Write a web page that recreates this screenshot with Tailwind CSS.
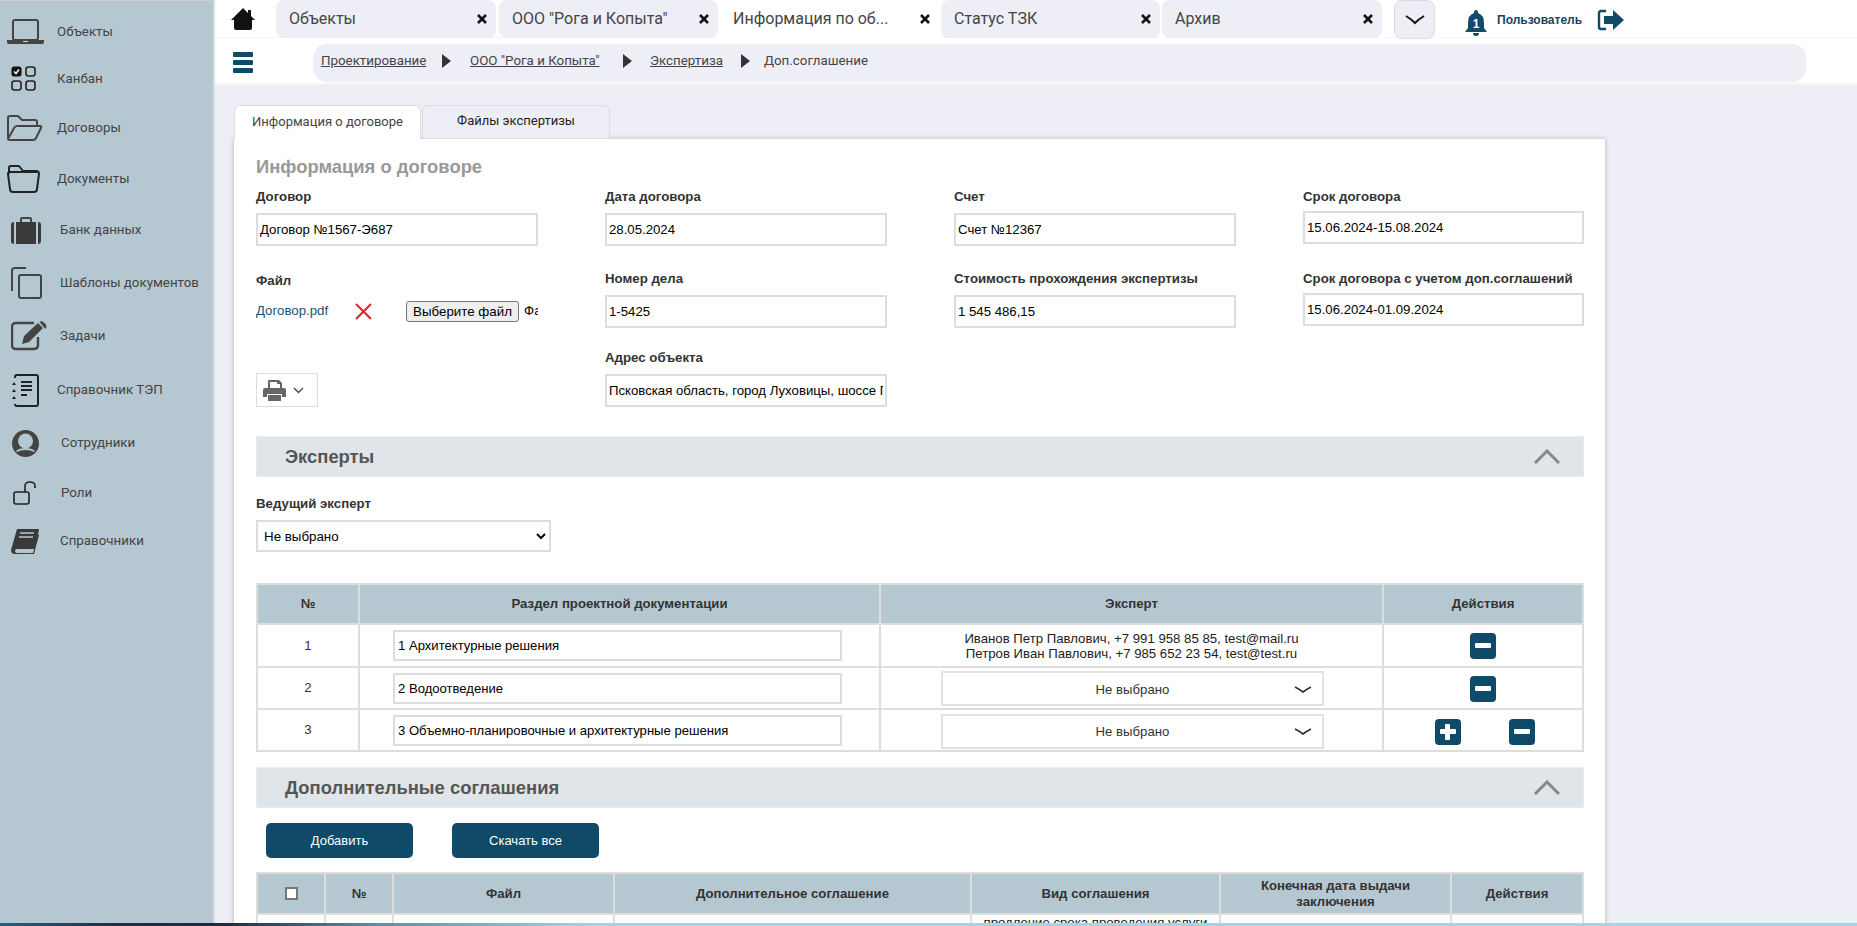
<!DOCTYPE html>
<html lang="ru">
<head>
    <meta charset="UTF-8">
    <title>Информация о договоре</title>
    <script src="https://cdn.jsdelivr.net/npm/@tailwindcss/browser@4"></script>
</head>
<body class="h-[926px] w-[1857px] overflow-hidden flex bg-[#eeeff6] relative font-['Liberation_Sans',sans-serif] text-[13.25px] text-[#333]">

    <!-- sidebar -->
    <aside class="w-[215px] h-full shrink-0 bg-[#b5c8d2] border-r-2 border-[#d5dde3] border-t border-t-[#d0d0d0] pt-[7px] font-['Roboto',sans-serif] text-[13.33px] text-[#444]">
        <div class="h-[47px] flex items-center">
            <svg class="w-[37px] h-[26px] ml-[7px] mr-[13px]" viewBox="0 0 37 26"><rect x="6" y="1" width="25" height="20" rx="2" fill="none" stroke="#444" stroke-width="2"/><path d="M0 21h37v2q0 2-2 2H2q-2 0-2-2z" fill="#444"/><rect x="16" y="22" width="5" height="1" fill="#ddd"/></svg>
            <span>Объекты</span>
        </div>
        <div class="h-[47px] flex items-center">
            <svg class="w-[25px] h-[25px] ml-[11px] mr-[21px]" viewBox="0 0 25 25"><rect x="0.5" y="0.5" width="10" height="10" rx="2.5" fill="#111"/><path d="M3 5.500l2 2 3-4" fill="none" stroke="#fff" stroke-width="1.500"/><rect x="15" y="1" width="9" height="9" rx="2.500" fill="none" stroke="#222" stroke-width="1.600"/><rect x="1" y="15" width="9" height="9" rx="2.500" fill="none" stroke="#222" stroke-width="1.600"/><rect x="15" y="15" width="9" height="9" rx="2.500" fill="none" stroke="#222" stroke-width="1.600"/></svg>
            <span>Канбан</span>
        </div>
        <div class="h-[52px] flex items-center">
            <svg class="w-[36px] h-[26px] ml-[7px] mr-[14px]" viewBox="0 0 36 26"><path d="M1 22V3q0-2 2-2h8l4 4h13q2 0 2 2v4M1 24l6-11q1-2 3-2h23q2 0 1 2l-5 10q-1 2-3 2H3q-2 0-2-2z" fill="none" stroke="#444" stroke-width="2" stroke-linejoin="round"/></svg>
            <span>Договоры</span>
        </div>
        <div class="h-[50px] flex items-center">
            <svg class="w-[33px] h-[28px] ml-[7px] mr-[17px]" viewBox="0 0 33 28"><path d="M2 8V3q0-2 2-2h8l4 5h13q3 0 3 3l-2 15q0 3-3 3H6q-3 0-3-3L1 9q0-2 1-1zM2 7h28" fill="none" stroke="#222" stroke-width="2" stroke-linejoin="round"/></svg>
            <span>Документы</span>
        </div>
        <div class="h-[52px] flex items-center">
            <svg class="w-[30px] h-[27px] ml-[11px] mr-[19px]" viewBox="0 0 30 27"><path d="M10 5V2q0-1 1-1h8q1 0 1 1v3" fill="none" stroke="#444" stroke-width="2"/><path d="M5 5h20v22H5zM3 5v22Q0 27 0 24V8q0-3 3-3zM27 5q3 0 3 3v16q0 3-3 3z" fill="#3a3a3a"/></svg>
            <span>Банк данных</span>
        </div>
        <div class="h-[53px] flex items-center">
            <svg class="w-[31px] h-[32px] ml-[11px] mr-[18px]" viewBox="0 0 31 32"><path d="M15 1H4Q1 1 1 4v20" fill="none" stroke="#444" stroke-width="2"/><rect x="8" y="8" width="22" height="23" rx="2" fill="none" stroke="#444" stroke-width="2"/></svg>
            <span>Шаблоны документов</span>
        </div>
        <div class="h-[54px] flex items-center">
            <svg class="w-[36px] h-[30px] ml-[11px] mr-[13px]" viewBox="0 0 36 30"><path d="M23 2H5Q1 2 1 6v18q0 4 4 4h18q4 0 4-4v-8" fill="none" stroke="#444" stroke-width="2.400"/><path d="M13 15L27 2l5 5-14 14-7 2zM28.500 1l2-1q1 0 4 3 1 2 1 3l-1 2z" fill="#444"/></svg>
            <span>Задачи</span>
        </div>
        <div class="h-[54px] flex items-center">
            <svg class="w-[28px] h-[33px] ml-[11px] mr-[18px]" viewBox="0 0 28 33"><path d="M4 4V3q0-2 2-2h19q2 0 2 2v27q0 2-2 2H6q-2 0-2-2" fill="none" stroke="#222" stroke-width="2"/><path d="M10 8h11M10 12h11M10 16h11M10 21h6" stroke="#222" stroke-width="2"/><path d="M3 8l2 3H1zM3 15l2 3H1zM3 22l2 3H1z" fill="#222"/></svg>
            <span>Справочник ТЭП</span>
        </div>
        <div class="h-[52px] flex items-center">
            <svg class="w-[27px] h-[27px] ml-[12px] mr-[22px]" viewBox="0 0 27 27"><circle cx="13.500" cy="13.500" r="13.500" fill="#444"/><circle cx="13.500" cy="11" r="7.500" fill="#b5c8d2"/><path d="M4 21q3-3 9.500-3t9.500 3l-1 1q-3-2-8.500-2T5 22z" fill="#b5c8d2"/></svg>
            <span>Сотрудники</span>
        </div>
        <div class="h-[47px] flex items-center">
            <svg class="w-[24px] h-[24px] ml-[13px] mr-[24px]" viewBox="0 0 24 24"><rect x="1" y="11" width="15" height="12" rx="2" fill="none" stroke="#222" stroke-width="1.600"/><path d="M12 11V5q0-4 5-4t5 4v2" fill="none" stroke="#222" stroke-width="1.600"/></svg>
            <span>Роли</span>
        </div>
        <div class="h-[50px] flex items-center">
            <svg class="w-[29px] h-[26px] ml-[11px] mr-[20px]" viewBox="0 0 29 26"><path d="M6 1h21q1 0 1 1l-4 18q0 1-2 1H6q-2 0-2 2t2 2h16l5-19 1 1-5 19H4q-4 0-4-4z" fill="#3a3a3a"/><path d="M9 5h14M8 9h14" stroke="#b5c8d2" stroke-width="1.500"/></svg>
            <span>Справочники</span>
        </div>
    </aside>

    <main class="flex-1 min-w-0 flex flex-col">
        <!-- tabs row -->
        <header class="bg-white h-[85px] shrink-0 border-b-2 border-[#f4f4f8] font-['Roboto',sans-serif]">
            <div class="h-[38px] flex items-start border-b border-[#f6f6f8]">
                <svg class="w-[24px] h-[22px] ml-[16px] mt-[8px]" viewBox="0 0 24 22"><path d="M12 0L0 12h3v8q0 2 2 2h14q2 0 2-2v-8h3l-4-4V2h-3v3z" fill="#111"/></svg>
                <div class="w-[220px] h-[38px] ml-[21px] bg-[#eeeff6] rounded-lg flex items-center justify-between pl-[13px] pr-[9px] text-[16px] text-[#444]">
                    <span>Объекты</span>
                    <svg class="w-[10px] h-[10px]" viewBox="0 0 10 10"><path d="M1 1l8 8M9 1L1 9" stroke="#111" stroke-width="2.500"/></svg>
                </div>
                <div class="w-[219px] h-[38px] ml-[3px] bg-[#eeeff6] rounded-lg flex items-center justify-between pl-[13px] pr-[9px] text-[16px] text-[#444]">
                    <span>ООО "Рога и Копыта"</span>
                    <svg class="w-[10px] h-[10px]" viewBox="0 0 10 10"><path d="M1 1l8 8M9 1L1 9" stroke="#111" stroke-width="2.500"/></svg>
                </div>
                <div class="w-[223px] h-[38px] bg-white flex items-center justify-between pl-[15px] pr-[11px] text-[16px] text-[#444]">
                    <span>Информация по об...</span>
                    <svg class="w-[10px] h-[10px]" viewBox="0 0 10 10"><path d="M1 1l8 8M9 1L1 9" stroke="#111" stroke-width="2.500"/></svg>
                </div>
                <div class="w-[219px] h-[38px] bg-[#eeeff6] rounded-lg flex items-center justify-between pl-[13px] pr-[9px] text-[16px] text-[#444]">
                    <span>Статус ТЗК</span>
                    <svg class="w-[10px] h-[10px]" viewBox="0 0 10 10"><path d="M1 1l8 8M9 1L1 9" stroke="#111" stroke-width="2.500"/></svg>
                </div>
                <div class="w-[220px] h-[38px] ml-[2px] bg-[#eeeff6] rounded-lg flex items-center justify-between pl-[13px] pr-[9px] text-[16px] text-[#444]">
                    <span>Архив</span>
                    <svg class="w-[10px] h-[10px]" viewBox="0 0 10 10"><path d="M1 1l8 8M9 1L1 9" stroke="#111" stroke-width="2.500"/></svg>
                </div>
                <div class="w-[41px] h-[39px] ml-[12px] bg-[#eeeff6] border border-[#ddd] rounded-lg flex items-center justify-center">
                    <svg class="w-[20px] h-[10px]" viewBox="0 0 20 10"><path d="M1 1q5 3 9 7 4-4 9-7" fill="none" stroke="#111" stroke-width="2"/></svg>
                </div>
                <svg class="w-[22px] h-[26px] ml-[30px] mt-[10px]" viewBox="0 0 22 26"><path d="M11 0q2 0 2 3 6 2 6 10v5l3 4H0l3-4v-5q0-8 6-10 0-3 2-3zM8 23h6q0 3-3 3t-3-3z" fill="#0f4a68"/><text x="11" y="18" text-anchor="middle" font-size="12" font-weight="bold" fill="#fff" font-family="Liberation Sans">1</text></svg>
                <span class="ml-[10px] mt-[13px] text-[12px] leading-[14px] font-bold text-[#14465f] font-['Liberation_Sans',sans-serif]">Пользователь</span>
                <svg class="w-[28px] h-[22px] ml-[15px] mt-[9px]" viewBox="0 0 28 22"><path d="M9 2H4Q2 2 2 4v14q0 2 2 2h5" fill="none" stroke="#0f4a68" stroke-width="2.400"/><path d="M7 7h9V1l11 10-11 10v-6H7z" fill="#0f4a68"/></svg>
            </div>
            <div class="flex items-center h-[46px] pt-[4px]">
                <div class="w-[20px] h-[21px] ml-[18px] mb-[2px] flex flex-col justify-between">
                    <div class="h-[5px] bg-[#0f4a68] rounded-[1px]"></div>
                    <div class="h-[5px] bg-[#0f4a68] rounded-[1px]"></div>
                    <div class="h-[5px] bg-[#0f4a68] rounded-[1px]"></div>
                </div>
                <nav class="w-[1493px] h-[38px] ml-[60px] bg-[#eeeff6] rounded-[14px] flex items-center pl-[8px] pb-[4px] text-[13.33px] text-[#444]">
                    <a class="underline w-[105px] whitespace-nowrap">Проектирование</a>
                    <svg class="w-[9px] h-[14px] ml-[16px]" viewBox="0 0 9 14"><path d="M0 0l9 7-9 7z" fill="#333"/></svg>
                    <a class="underline ml-[19px] w-[128px] whitespace-nowrap">ООО "Рога и Копыта"</a>
                    <svg class="w-[9px] h-[14px] ml-[25px]" viewBox="0 0 9 14"><path d="M0 0l9 7-9 7z" fill="#333"/></svg>
                    <a class="underline ml-[18px] w-[71px] whitespace-nowrap">Экспертиза</a>
                    <svg class="w-[9px] h-[14px] ml-[20px]" viewBox="0 0 9 14"><path d="M0 0l9 7-9 7z" fill="#333"/></svg>
                    <span class="ml-[14px]">Доп.соглашение</span>
                </nav>
            </div>
        </header>

        <!-- page -->
        <div class="pl-[19px] pt-[20px] w-[1392px]">
            <div class="flex h-[34px] items-end">
                <div class="w-[187px] h-[34px] pb-[2px] bg-white border border-b-0 border-[#ddd] rounded-t-md flex items-center justify-center text-[13px] text-[#444] font-['Roboto',sans-serif]">Информация о договоре</div>
                <div class="w-[188px] h-[34px] pb-[2px] ml-[1px] bg-[#eeeff6] border border-[#ddd] rounded-t-md flex items-center justify-center text-[13px] text-[#222] font-['Roboto',sans-serif]">Файлы экспертизы</div>
            </div>
            <div class="w-[1371px] h-[787px] overflow-hidden bg-white shadow-[0_0_5px_rgba(0,0,0,0.25)] px-[22px] pt-[16px]">
                <h1 class="text-[18.400px] leading-[24px] font-bold text-[#999]">Информация о договоре</h1>

                <div class="grid grid-cols-[282px_282px_282px_281px] gap-x-[67px] mt-[9px] h-[241px]">
                    <div class="flex flex-col">
                        <label class="font-bold leading-[18px] h-[25px]">Договор</label>
                        <input class="h-[33px] border-2 border-[#ddd] px-[2px] text-[13.200px] text-black outline-none" value="Договор №1567-Э687">
                        <label class="font-bold leading-[18px] mt-[26px]">Файл</label>
                        <div class="flex items-center mt-[10px] h-[22px] w-[282px] overflow-hidden">
                            <a class="text-[#14567a] w-[73px] shrink-0">Договор.pdf</a>
                            <svg class="w-[17px] h-[17px] ml-[26px] shrink-0" viewBox="0 0 17 17"><path d="M1 1l15 15M16 1L1 16" stroke="#ee1c25" stroke-width="2"/></svg>
                            <button class="ml-[34px] shrink-0 w-[113px] h-[21px] bg-[#efefef] border border-[#767676] rounded-[3px] text-[13.33px] text-black">Выберите файл</button>
                            <span class="ml-[5px] text-[13.33px] text-black whitespace-nowrap">Файл не выбран</span>
                        </div>
                        <div class="mt-[51px] w-[62px] h-[34px] border border-[#ddd] flex items-center pl-[6px]">
                            <svg class="w-[23px] h-[23px]" viewBox="0 0 23 23"><path d="M5 9V2q0-1 1-1h10l3 3v5h-2V5h-3V3H7v6zM2 9h19q2 0 2 2v7h-4v-3H4v3H0v-7q0-2 2-2zM5 16h13v6H5z" fill="#666"/></svg>
                            <svg class="w-[11px] h-[7px] ml-[7px]" viewBox="0 0 11 7"><path d="M1 1l4.500 4.500L10 1" fill="none" stroke="#444" stroke-width="1.300"/></svg>
                        </div>
                    </div>
                    <div class="flex flex-col">
                        <label class="font-bold leading-[18px] h-[25px]">Дата договора</label>
                        <input class="h-[33px] border-2 border-[#ddd] px-[2px] text-[13.200px] text-black outline-none" value="28.05.2024">
                        <label class="font-bold leading-[18px] mt-[24px]">Номер дела</label>
                        <input class="h-[33px] mt-[7px] border-2 border-[#ddd] px-[2px] text-[13.200px] text-black outline-none" value="1-5425">
                        <label class="font-bold leading-[18px] mt-[21px]">Адрес объекта</label>
                        <input class="h-[33px] mt-[7px] border-2 border-[#ddd] px-[2px] text-[13.200px] text-black outline-none" value="Псковская область, город Луховицы, шоссе Первое">
                    </div>
                    <div class="flex flex-col">
                        <label class="font-bold leading-[18px] h-[25px]">Счет</label>
                        <input class="h-[33px] border-2 border-[#ddd] px-[2px] text-[13.200px] text-black outline-none" value="Счет №12367">
                        <label class="font-bold leading-[18px] mt-[24px]">Стоимость прохождения экспертизы</label>
                        <input class="h-[33px] mt-[7px] border-2 border-[#ddd] px-[2px] text-[13.200px] text-black outline-none" value="1 545 486,15">
                    </div>
                    <div class="flex flex-col">
                        <label class="font-bold leading-[18px] h-[23px]">Срок договора</label>
                        <input class="h-[33px] border-2 border-[#ddd] px-[2px] text-[13.200px] text-black outline-none" value="15.06.2024-15.08.2024">
                        <label class="font-bold leading-[18px] mt-[26px]">Срок договора с учетом доп.соглашений</label>
                        <input class="h-[33px] mt-[5px] border-2 border-[#ddd] px-[2px] text-[13.200px] text-black outline-none" value="15.06.2024-01.09.2024">
                    </div>
                </div>

                <!-- experts -->
                <div class="h-[41px] w-[1328px] mt-[7px] bg-[#dfe5e9] border border-[#e8ecef] flex items-center justify-between pl-[28px] pr-[23px]">
                    <span class="text-[18.400px] font-bold text-[#555]">Эксперты</span>
                    <svg class="w-[26px] h-[15px]" viewBox="0 0 26 15"><path d="M1 14L13 2l12 12" fill="none" stroke="#888" stroke-width="3"/></svg>
                </div>
                <label class="block font-bold leading-[18px] mt-[18px]">Ведущий эксперт</label>
                <select class="block w-[295px] h-[32px] mt-[7px] border-2 border-[#ddd] pl-[2px] bg-white text-[13.33px] text-black outline-none appearance-auto"><option>Не выбрано</option></select>

                <table class="w-[1328px] mt-[31px] table-fixed border-collapse border-2 border-[#ddd] text-[13.200px]">
                    <colgroup><col class="w-[102px]"><col class="w-[521px]"><col class="w-[503px]"><col></colgroup>
                    <thead>
                        <tr class="h-[40px] bg-[#b5c8d2] font-bold text-[#333]">
                            <th class="border-2 border-[#ddd]">№</th>
                            <th class="border-2 border-[#ddd]">Раздел проектной документации</th>
                            <th class="border-2 border-[#ddd]">Эксперт</th>
                            <th class="border-2 border-[#ddd]">Действия</th>
                        </tr>
                    </thead>
                    <tbody class="text-center">
                        <tr class="h-[43px]">
                            <td class="border-2 border-[#ddd]">1</td>
                            <td class="border-2 border-[#ddd]"><input class="block w-[449px] h-[31px] ml-[33px] border-2 border-[#ddd] px-[3px] text-[13.100px] text-black outline-none" value="1 Архитектурные решения"></td>
                            <td class="border-2 border-[#ddd] leading-[15px] text-[#222]">Иванов Петр Павлович, +7 991 958 85 85, test@mail.ru<br>Петров Иван Павлович, +7 985 652 23 54, test@test.ru</td>
                            <td class="border-2 border-[#ddd]">
                                <div class="flex justify-center">
                                    <div class="w-[26px] h-[26px] bg-[#0f4a68] rounded-[4px] flex items-center justify-center"><div class="w-[16px] h-[5px] bg-white rounded-[1px]"></div></div>
                                </div>
                            </td>
                        </tr>
                        <tr class="h-[42px]">
                            <td class="border-2 border-[#ddd]">2</td>
                            <td class="border-2 border-[#ddd]"><input class="block w-[449px] h-[31px] ml-[33px] border-2 border-[#ddd] px-[3px] text-[13.100px] text-black outline-none" value="2 Водоотведение"></td>
                            <td class="border-2 border-[#ddd]">
                                <div class="w-[383px] h-[35px] ml-[60px] mt-[1px] pt-[3px] border-2 border-[#e2e2e2] flex items-center relative text-[#333]">
                                    <span class="w-full text-center">Не выбрано</span>
                                    <svg class="w-[18px] h-[8px] absolute right-[10px] top-[13px]" viewBox="0 0 18 8"><path d="M1 1q4 2 8 5 4-3 8-5" fill="none" stroke="#333" stroke-width="1.600"/></svg>
                                </div>
                            </td>
                            <td class="border-2 border-[#ddd]">
                                <div class="flex justify-center mt-[1px]">
                                    <div class="w-[26px] h-[26px] bg-[#0f4a68] rounded-[4px] flex items-center justify-center"><div class="w-[16px] h-[5px] bg-white rounded-[1px]"></div></div>
                                </div>
                            </td>
                        </tr>
                        <tr class="h-[42px]">
                            <td class="border-2 border-[#ddd]">3</td>
                            <td class="border-2 border-[#ddd]"><input class="block w-[449px] h-[31px] ml-[33px] border-2 border-[#ddd] px-[3px] text-[13.100px] text-black outline-none" value="3 Объемно-планировочные и архитектурные решения"></td>
                            <td class="border-2 border-[#ddd]">
                                <div class="w-[383px] h-[35px] ml-[60px] mt-[2px] pt-[2px] border-2 border-[#e2e2e2] flex items-center relative text-[#333]">
                                    <span class="w-full text-center">Не выбрано</span>
                                    <svg class="w-[18px] h-[8px] absolute right-[10px] top-[12px]" viewBox="0 0 18 8"><path d="M1 1q4 2 8 5 4-3 8-5" fill="none" stroke="#333" stroke-width="1.600"/></svg>
                                </div>
                            </td>
                            <td class="border-2 border-[#ddd]">
                                <div class="flex justify-center gap-[48px] ml-[3px] mt-[3px]">
                                    <div class="w-[26px] h-[26px] bg-[#0f4a68] rounded-[4px] relative flex items-center justify-center"><div class="w-[16px] h-[5px] bg-white rounded-[1px]"></div><div class="absolute w-[5px] h-[16px] bg-white rounded-[1px]"></div></div>
                                    <div class="w-[26px] h-[26px] bg-[#0f4a68] rounded-[4px] flex items-center justify-center"><div class="w-[16px] h-[5px] bg-white rounded-[1px]"></div></div>
                                </div>
                            </td>
                        </tr>
                    </tbody>
                </table>

                <!-- agreements -->
                <div class="h-[41px] w-[1328px] mt-[15px] bg-[#dfe5e9] border border-[#e8ecef] flex items-center justify-between pl-[28px] pr-[23px]">
                    <span class="text-[18.400px] font-bold text-[#555]">Дополнительные соглашения</span>
                    <svg class="w-[26px] h-[15px]" viewBox="0 0 26 15"><path d="M1 14L13 2l12 12" fill="none" stroke="#888" stroke-width="3"/></svg>
                </div>
                <div class="flex gap-[39px] ml-[10px] mt-[15px]">
                    <button class="w-[147px] h-[35px] bg-[#0f4a68] rounded-[5px] text-white text-[13px]">Добавить</button>
                    <button class="w-[147px] h-[35px] bg-[#0f4a68] rounded-[5px] text-white text-[13px]">Скачать все</button>
                </div>
                <div class="w-[1328px] h-[54px] mt-[14px] overflow-hidden">
                    <table class="w-[1328px] table-fixed border-collapse border-2 border-[#ddd] text-[13.200px]">
                        <colgroup><col class="w-[68px]"><col class="w-[68px]"><col class="w-[221px]"><col class="w-[357px]"><col class="w-[249px]"><col class="w-[231px]"><col></colgroup>
                        <thead>
                            <tr class="h-[41px] bg-[#b5c8d2] font-bold text-[#333] leading-[16px]">
                                <th class="border-2 border-[#ddd]"><input type="checkbox" class="block mx-auto w-[13px] h-[13px] appearance-none bg-white border-2 border-[#777]"></th>
                                <th class="border-2 border-[#ddd]">№</th>
                                <th class="border-2 border-[#ddd]">Файл</th>
                                <th class="border-2 border-[#ddd]">Дополнительное соглашение</th>
                                <th class="border-2 border-[#ddd]">Вид соглашения</th>
                                <th class="border-2 border-[#ddd] px-[20px]">Конечная дата выдачи заключения</th>
                                <th class="border-2 border-[#ddd]">Действия</th>
                            </tr>
                        </thead>
                        <tbody class="text-center">
                            <tr class="h-[50px] align-top">
                                <td class="border-2 border-[#ddd]"></td>
                                <td class="border-2 border-[#ddd]"></td>
                                <td class="border-2 border-[#ddd]"></td>
                                <td class="border-2 border-[#ddd]"></td>
                                <td class="border-2 border-[#ddd] leading-[15px] text-[#222]">продление срока проведения услуги</td>
                                <td class="border-2 border-[#ddd]"></td>
                                <td class="border-2 border-[#ddd]"><div class="w-[18px] h-[18px] mx-auto mt-[8px] bg-[#aaa]"></div></td>
                            </tr>
                        </tbody>
                    </table>
                </div>
            </div>
        </div>
    </main>

    <div class="absolute left-0 right-0 bottom-0 h-[3px] bg-[linear-gradient(90deg,#2a5f80_0%,#1f2f44_6%,#1c2a3c_12%,#5f8aa5_20%,#a7d3e3_32%,#a7d3e3_100%)]"></div>
</body>
</html>
